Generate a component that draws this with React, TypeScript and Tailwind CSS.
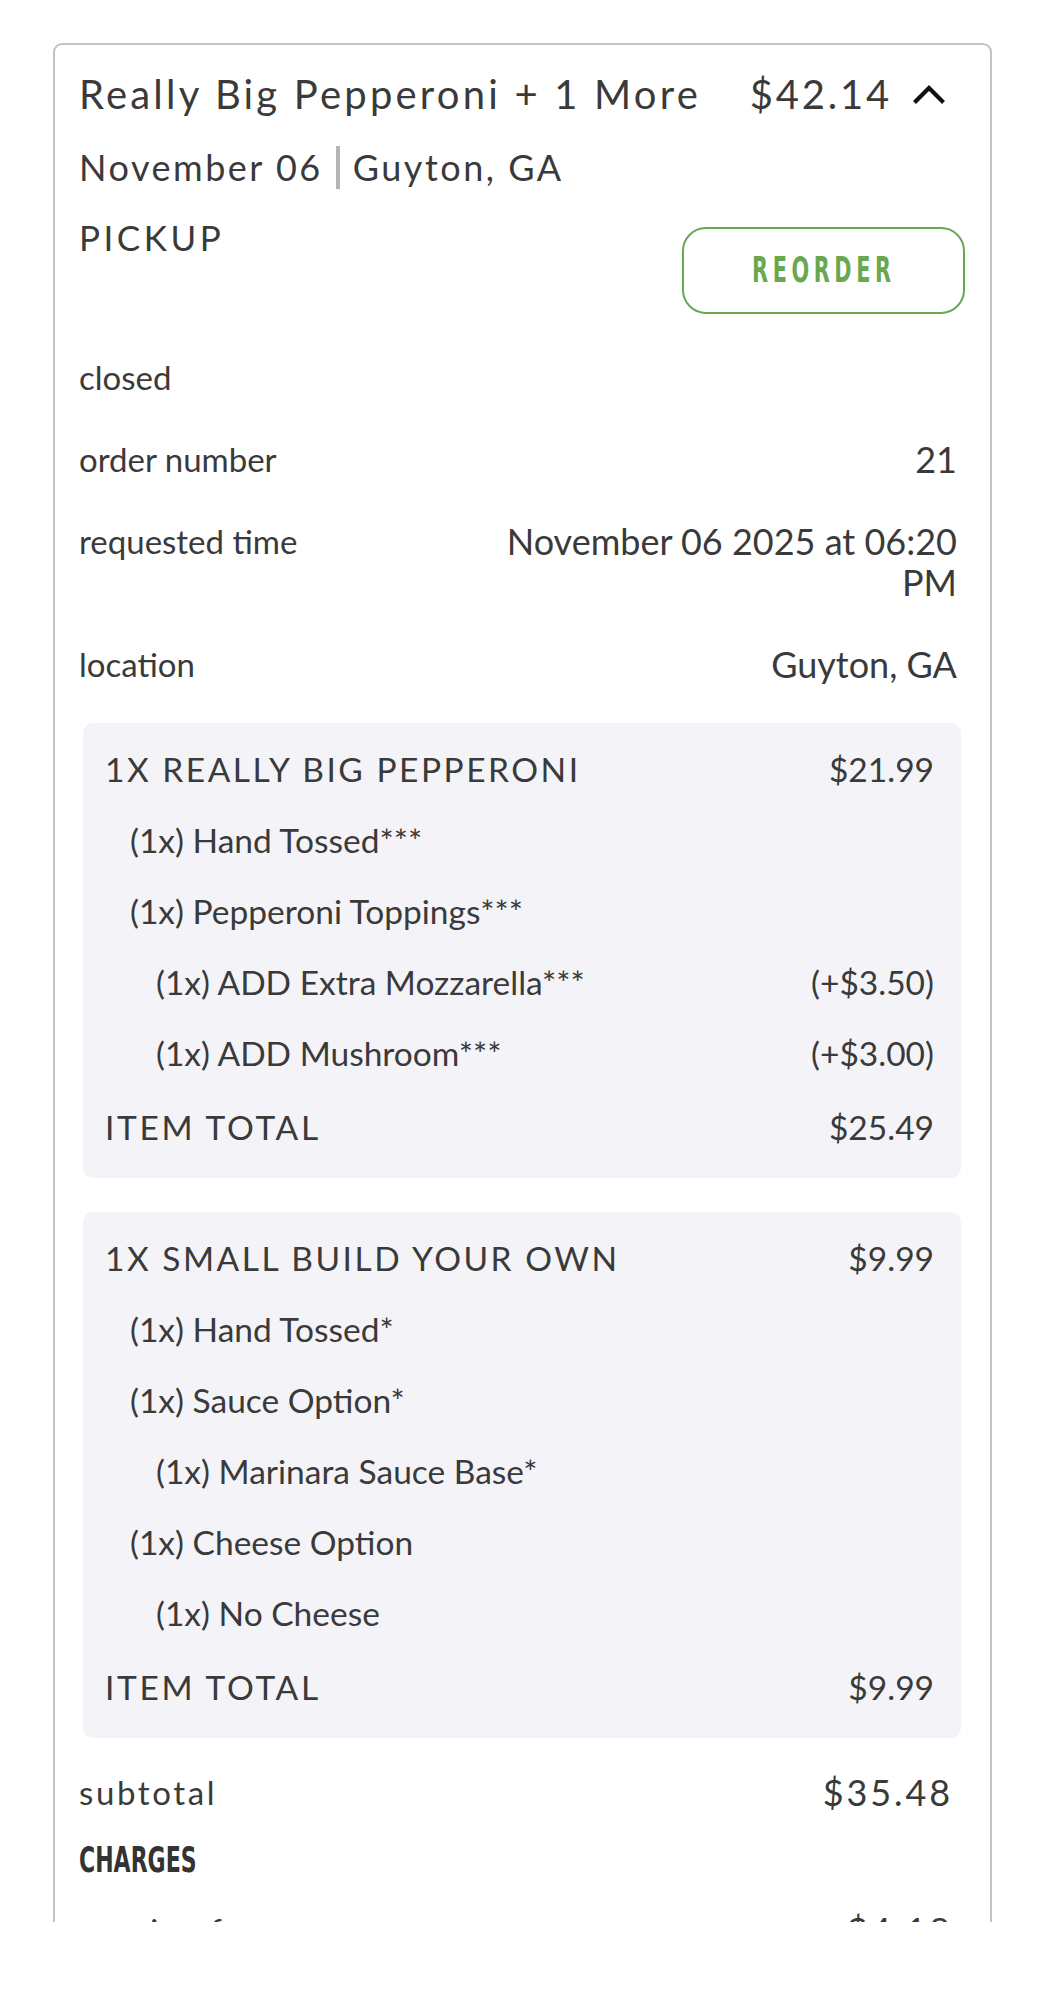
import React from "react";

type Mod = { text: string; level: 1 | 2; price?: string };
type Item = { name: string; price: string; mods: Mod[]; total: string };

const items: Item[] = [
  {
    name: "1X Really Big Pepperoni",
    price: "$21.99",
    mods: [
      { text: "(1x) Hand Tossed***", level: 1 },
      { text: "(1x) Pepperoni Toppings***", level: 1 },
      { text: "(1x) ADD Extra Mozzarella***", level: 2, price: "(+$3.50)" },
      { text: "(1x) ADD Mushroom***", level: 2, price: "(+$3.00)" },
    ],
    total: "$25.49",
  },
  {
    name: "1X Small Build Your Own",
    price: "$9.99",
    mods: [
      { text: "(1x) Hand Tossed*", level: 1 },
      { text: "(1x) Sauce Option*", level: 1 },
      { text: "(1x) Marinara Sauce Base*", level: 2 },
      { text: "(1x) Cheese Option", level: 1 },
      { text: "(1x) No Cheese", level: 2 },
    ],
    total: "$9.99",
  },
];

function DetailRow({ label, value }: { label: string; value?: string }) {
  return (
    <div className="flex items-start justify-between">
      <span className="text-[33px]">{label}</span>
      {value && <span className="max-w-[480px] text-right text-[36px]">{value}</span>}
    </div>
  );
}

function ItemBox({ item }: { item: Item }) {
  return (
    <div className="mx-[4px] rounded-[10px] bg-[#f4f4f8] pb-[15px] pl-[22px] pr-[27px] pt-[11px] text-[33.5px] leading-[71px]">
      <div className="flex justify-between">
        <span className="uppercase tracking-[0.075em]">{item.name}</span>
        <span>{item.price}</span>
      </div>
      {item.mods.map((m) => (
        <div
          key={m.text}
          className={m.level === 2 ? "flex justify-between pl-[51px]" : "flex justify-between pl-[25px]"}
        >
          <span>{m.text}</span>
          {m.price && <span>{m.price}</span>}
        </div>
      ))}
      <div className="mt-[3px] flex justify-between">
        <span className="tracking-[0.08em]">ITEM TOTAL</span>
        <span>{item.total}</span>
      </div>
    </div>
  );
}

export default function App() {
  return (
    <div className="min-h-screen bg-white font-['Lato','Noto_Sans',sans-serif] text-[#3a3a3a]">
      <div className="pl-[53px] pr-[52px] pt-[43px]">
        {/* card is cut off at the bottom of the view */}
        <div className="h-[1879px] overflow-hidden">
          <div className="rounded-[9px] border-2 border-[#c3c3c3] pb-10 pl-[24px] pr-[25px] pt-[25px]">
            {/* header */}
            <div className="flex items-center justify-between leading-[48px]">
              <h1 className="text-[40px] tracking-[0.08em]">Really Big Pepperoni + 1 More</h1>
              <div className="flex items-center">
                <span className="text-[40px] tracking-[0.07em]">$42.14</span>
                <svg
                  width="34"
                  height="21"
                  viewBox="0 0 34 21"
                  className="ml-[20px] mr-[19px]"
                  fill="none"
                  stroke="#111"
                  strokeWidth="4.2"
                  strokeLinejoin="miter"
                >
                  <polyline points="2.5,18.5 17,4 31.5,18.5" />
                </svg>
              </div>
            </div>

            <div className="mt-[27px] flex items-center gap-[13px] text-[36px] leading-[44px] tracking-[0.07em]">
              <span>November 06</span>
              <span className="h-[43px] w-[4px] bg-[#b5b5b5]" />
              <span>Guyton, GA</span>
            </div>

            <div className="mt-[26px] flex items-start justify-between">
              <span className="text-[35px] leading-[44px] tracking-[0.1em]">PICKUP</span>
              <button className="mt-[12px] flex h-[87px] w-[283px] items-center justify-center rounded-[24px] border-2 border-[#6aa84f] text-[#6aa84f]">
                <span className="inline-block scale-x-[0.66] font-['Liberation_Sans_Narrow','DejaVu_Sans_Condensed',sans-serif] text-[35px] font-bold tracking-[0.2em]">
                  REORDER
                </span>
              </button>
            </div>

            {/* details */}
            <div className="mt-[43px] flex flex-col gap-[41px] pr-[8px] leading-[41px]">
              <DetailRow label="closed" />
              <DetailRow label="order number" value="21" />
              <DetailRow label="requested time" value="November 06 2025 at 06:20 PM" />
              <DetailRow label="location" value="Guyton, GA" />
            </div>

            <div className="mt-[38px] flex flex-col gap-[34px]">
              {items.map((it) => (
                <ItemBox key={it.name} item={it} />
              ))}
            </div>

            <div className="mt-[32px] flex items-center justify-between pr-[12px] leading-[44px]">
              <span className="text-[33px] tracking-[0.08em]">subtotal</span>
              <span className="text-[36px] tracking-[0.08em]">$35.48</span>
            </div>

            <div className="mt-[26px] leading-[40px]">
              <span className="inline-block origin-left scale-x-[0.68] font-['Liberation_Sans_Narrow','DejaVu_Sans_Condensed',sans-serif] text-[36px] font-bold text-[#333]">
                CHARGES
              </span>
            </div>

            <div className="mt-[24px] flex items-start justify-between pr-[12px] leading-[41px]">
              <span className="text-[33px] tracking-[0.08em]">service fee</span>
              <span className="text-[36px] tracking-[0.08em]">$4.18</span>
            </div>
          </div>
        </div>
      </div>
    </div>
  );
}
